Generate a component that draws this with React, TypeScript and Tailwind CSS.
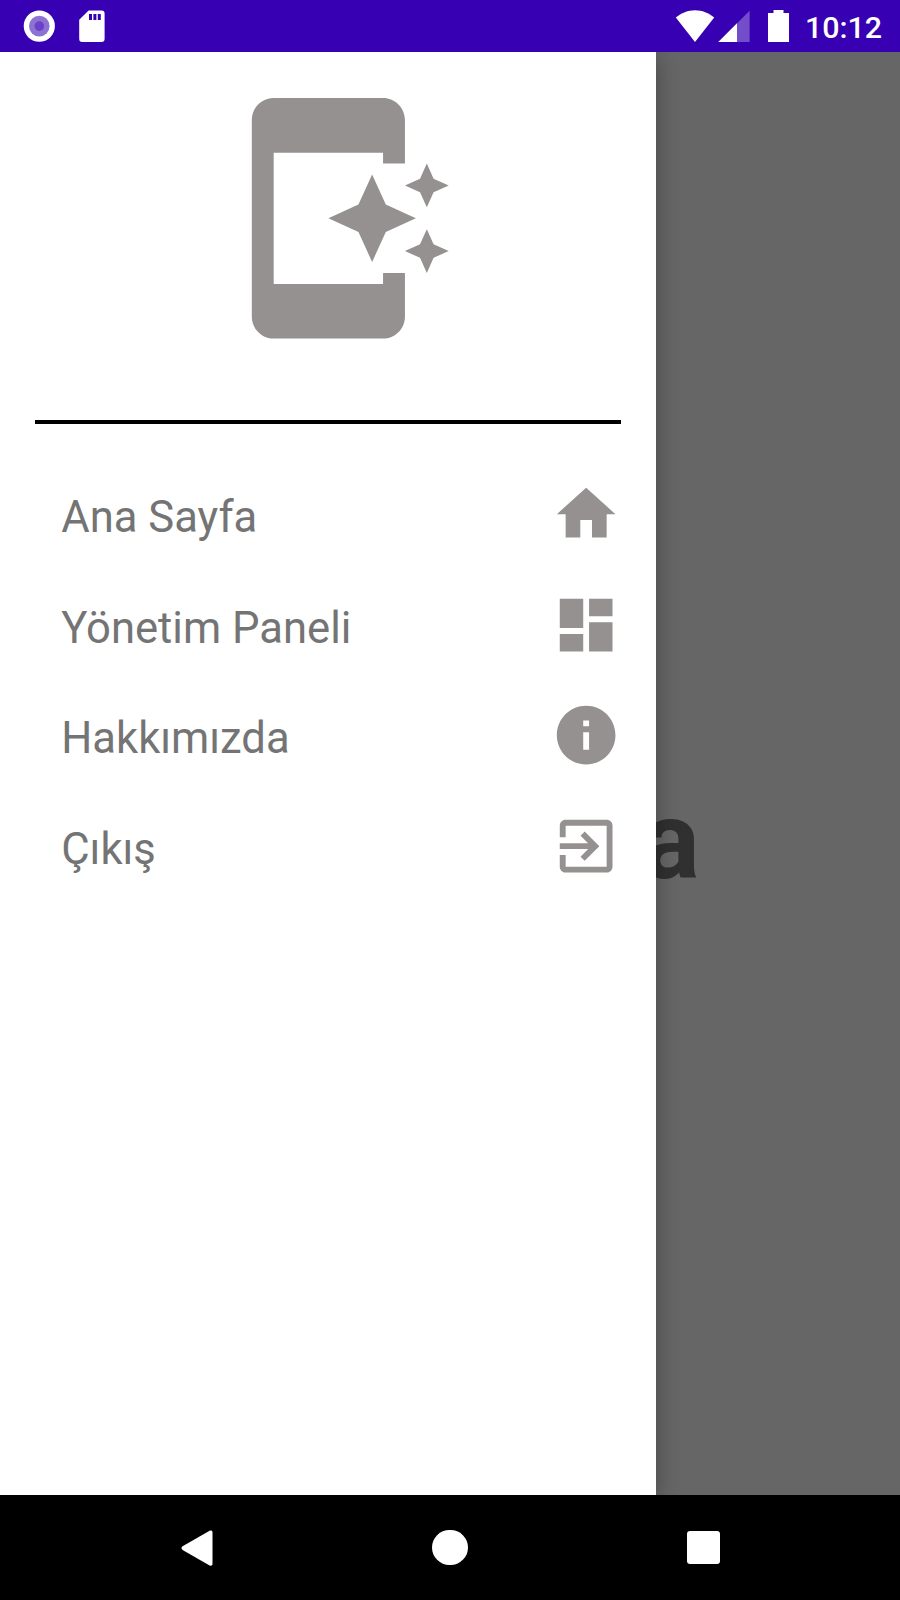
import type { ReactNode } from "react";

type IconProps = { className?: string };

const Glyph = ({ className, d }: IconProps & { d: string }) => (
  <svg viewBox="0 0 24 24" fill="currentColor" className={className} aria-hidden="true">
    <path d={d} />
  </svg>
);

const ICONS = {
  home: "M10 20v-6h4v6h5v-8h3L12 3 2 12h3v8z",
  dashboard: "M3 13h8V3H3v10zm0 8h8v-6H3v6zm10 0h8V11h-8v10zm0-18v6h8V3h-8z",
  info: "M12 2C6.48 2 2 6.48 2 12s4.48 10 10 10 10-4.48 10-10S17.52 2 12 2zm1 15h-2v-6h2v6zm0-8h-2V7h2v2z",
  exit: "M10.09 15.59L11.5 17l5-5-5-5-1.41 1.41L12.67 11H3v2h9.67l-2.58 2.59zM19 3H5c-1.11 0-2 .9-2 2v4h2V5h14v14H5v-4H3v4c0 1.1.89 2 2 2h14c1.1 0 2-.9 2-2V5c0-1.1-.9-2-2-2z",
  logo: "M15 18H5V6h10v1h2V3c0-1.1-.9-2-2-2H5c-1.1 0-2 .9-2 2v18c0 1.1.9 2 2 2h10c1.1 0 2-.9 2-2v-4h-2v1zM14 8l1.25 2.75L18 12l-2.75 1.25L14 16l-1.25-2.75L10 12l2.75-1.25L14 8zM19 7l.62 1.38L21 9l-1.38.62L19 11l-.62-1.38L17 9l1.38-.62L19 7zM19 13l.62 1.38L21 15l-1.38.62L19 17l-.62-1.38L17 15l1.38-.62L19 13z",
};

const MENU = [
  { label: "Ana Sayfa", icon: ICONS.home },
  { label: "Yönetim Paneli", icon: ICONS.dashboard },
  { label: "Hakkımızda", icon: ICONS.info },
  { label: "Çıkış", icon: ICONS.exit },
];

function StatusBar() {
  return (
    <header className="flex h-[52.4px] shrink-0 items-start bg-[#3700b3] pl-[23px] pr-[18px] pt-[10px] text-white">
      <svg className="h-8 w-8" viewBox="0 0 32 32">
        <circle cx="16.3" cy="16.1" r="15.6" fill="#fff" />
        <circle cx="16.3" cy="16.1" r="10.3" fill="#8e72d3" />
        <circle cx="16.3" cy="16.1" r="4.8" fill="#6b41c7" />
      </svg>
      <svg className="ml-6 h-8 w-[26px]" viewBox="0 0 26 32">
        <path d="M9.6.4H22.6a3 3 0 0 1 3 3V29a3 3 0 0 1-3 3H3.2a3 3 0 0 1-3-3V9.8z" fill="#fff" />
        <path d="M10 4h3v6h-3zM14.4 4h3v6h-3zM18.8 4h3v6h-3z" fill="#3700b3" />
      </svg>
      <div className="ml-auto flex items-start">
        <svg className="h-8 w-10" viewBox="0 0 40 32">
          <path d="M20 32 .8 7.6C6.2 3 13 .3 20 .3S33.8 3 39.2 7.6z" fill="#fff" />
        </svg>
        <svg className="ml-[3px] h-8 w-8" viewBox="0 0 32 32">
          <path d="M.3 32 31.6.7V32z" fill="#fff" fillOpacity=".3" />
          <path d="M.3 32 19 13.3V32z" fill="#fff" />
        </svg>
        <svg className="ml-[18px] h-8 w-[21px]" viewBox="0 0 21 32">
          <path d="M5.5 0h10v3H21v29H0V3h5.5z" fill="#fff" />
        </svg>
        <span className="ml-[16px] w-[77px] whitespace-nowrap pt-px text-[30.4px] font-medium leading-[34px]">10:12</span>
      </div>
    </header>
  );
}

function Drawer({ children }: { children: ReactNode }) {
  return (
    <aside className="absolute inset-y-0 left-0 flex w-[656.25px] flex-col bg-white shadow-[0_4px_22px_rgba(0,0,0,0.32)]">
      {children}
    </aside>
  );
}

function NavigationBar() {
  return (
    <nav className="flex h-[105px] shrink-0 items-center justify-between bg-black pl-[181px] pr-[179.5px] text-white">
      <svg className="h-9 w-8" viewBox="0 0 32 36" fill="currentColor">
        <path d="M1.6 16.2 28.6.8C30 .1 31.5.8 31.5 2.2V34c0 1.4-1.5 2.1-2.9 1.4L1.6 20c-1.5-.9-1.5-2.9 0-3.8z" />
      </svg>
      <span className="size-[35.4px] rounded-full bg-white" />
      <span className="size-[33.5px] rounded-[3px] bg-white" />
    </nav>
  );
}

export default function App() {
  return (
    <div className="flex h-[1600px] w-[900px] flex-col overflow-hidden font-['Roboto',sans-serif]">
      <StatusBar />
      <main className="relative flex flex-1 items-center justify-center overflow-hidden bg-[#666666]">
        <h1 className="pl-[2px] pt-[136px] text-[109.4px] font-bold leading-none text-[#303030]">Ana Sayfa</h1>
        <Drawer>
          <div className="flex h-[367.6px] justify-center pl-[43.9px] pt-[35px]">
            <Glyph d={ICONS.logo} className="size-[262.5px] text-[#959190]" />
          </div>
          <div className="mx-[35px] h-[4.375px] bg-black" />
          <ul className="mt-[34.8px] flex flex-col">
            {MENU.map(({ label, icon }) => (
              <li key={label} className="flex h-[110.6px] items-center justify-between pl-[61.25px] pr-[35px]">
                <span className="pt-[7px] text-[43.6px] leading-[52px] text-[#747474]">{label}</span>
                <Glyph d={icon} className="size-[70.3px] text-[#959190]" />
              </li>
            ))}
          </ul>
        </Drawer>
      </main>
      <NavigationBar />
    </div>
  );
}
